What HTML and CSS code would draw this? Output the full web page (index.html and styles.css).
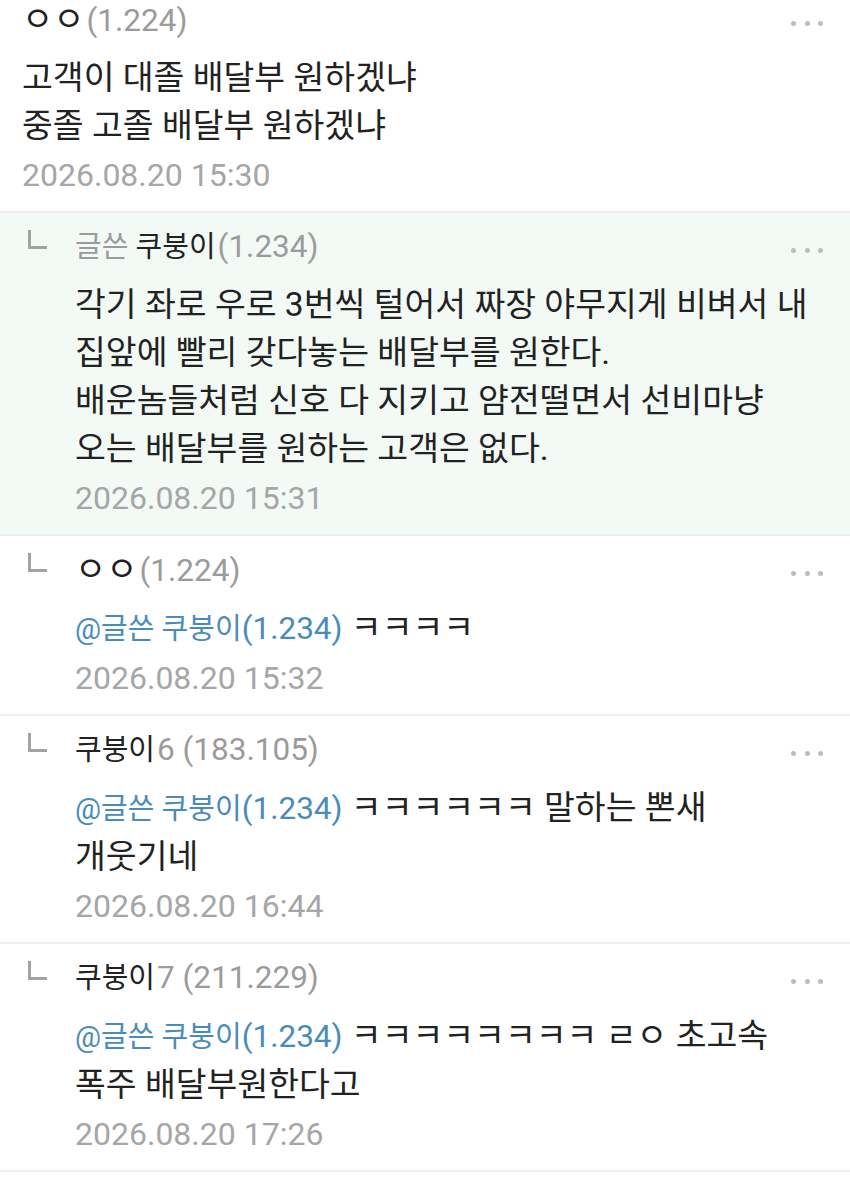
FILE: index.html
```html
<!DOCTYPE html>
<html lang="ko">
<head>
<meta charset="utf-8">
<title>댓글</title>
<link rel="stylesheet" href="styles.css">
</head>
<body>
<div class="list">
  <div class="comment first">
    <div class="content">
      <div class="head">
        <div class="name"><span class="jamo">ㅇㅇ</span><span class="ip">(1.224)</span></div>
        <div class="more"><i></i><i></i><i></i></div>
      </div>
      <div class="body">고객이 대졸 배달부 원하겠냐<br>중졸 고졸 배달부 원하겠냐</div>
      <div class="date">2026.08.20 15:30</div>
    </div>
  </div>

  <div class="comment reply writer">
    <div class="marker"></div>
    <div class="content">
      <div class="head">
        <div class="name"><span class="tag">글쓴</span> 쿠붕이<span class="ip">(1.234)</span></div>
        <div class="more"><i></i><i></i><i></i></div>
      </div>
      <div class="body">각기 좌로 우로 3번씩 털어서 짜장 야무지게 비벼서 내<br>집앞에 빨리 갖다놓는 배달부를 원한다.<br>배운놈들처럼 신호 다 지키고 얌전떨면서 선비마냥<br>오는 배달부를 원하는 고객은 없다.</div>
      <div class="date">2026.08.20 15:31</div>
    </div>
  </div>

  <div class="comment reply">
    <div class="marker"></div>
    <div class="content">
      <div class="head">
        <div class="name"><span class="jamo">ㅇㅇ</span><span class="ip">(1.224)</span></div>
        <div class="more"><i></i><i></i><i></i></div>
      </div>
      <div class="body"><span class="mention">@글쓴 쿠붕이<span class="num">(1.234)</span></span> ㅋㅋㅋㅋ</div>
      <div class="date">2026.08.20 15:32</div>
    </div>
  </div>

  <div class="comment reply">
    <div class="marker"></div>
    <div class="content">
      <div class="head">
        <div class="name">쿠붕이<span class="ip">6 (183.105)</span></div>
        <div class="more"><i></i><i></i><i></i></div>
      </div>
      <div class="body"><span class="mention">@글쓴 쿠붕이<span class="num">(1.234)</span></span> ㅋㅋㅋㅋㅋㅋ 말하는 뽄새<br>개웃기네</div>
      <div class="date">2026.08.20 16:44</div>
    </div>
  </div>

  <div class="comment reply">
    <div class="marker"></div>
    <div class="content">
      <div class="head">
        <div class="name">쿠붕이<span class="ip">7 (211.229)</span></div>
        <div class="more"><i></i><i></i><i></i></div>
      </div>
      <div class="body"><span class="mention">@글쓴 쿠붕이<span class="num">(1.234)</span></span> ㅋㅋㅋㅋㅋㅋㅋㅋ ㄹㅇ 초고속<br>폭주 배달부원한다고</div>
      <div class="date">2026.08.20 17:26</div>
    </div>
  </div>
</div>
</body>
</html>
```

FILE: styles.css
```css
html, body {
  margin: 0;
  padding: 0;
  background: #ffffff;
}

body {
  font-family: Roboto, "Noto Sans CJK KR", sans-serif;
  color: #222222;
  width: 850px;
  height: 1178px;
  overflow: hidden;
}

.comment {
  display: flex;
  padding: 14px 27px 16px 22px;
  border-bottom: 2px solid #ededed;
}

.comment.first {
  padding-top: 0;
}

.comment.reply {
  padding-left: 28px;
}

.comment.writer {
  background: #f3faf6;
}

.marker {
  flex: none;
  width: 16px;
  height: 16px;
  margin-top: 3px;
  margin-right: 28px;
  border-left: 3px solid #a3a3a3;
  border-bottom: 3px solid #a3a3a3;
}

.content {
  flex: 1;
  min-width: 0;
}

.head {
  display: flex;
  justify-content: space-between;
  align-items: center;
  height: 40px;
}

.name {
  font-size: 29px;
  line-height: 40px;
  color: #222222;
  white-space: nowrap;
}

.name .jamo {
  font-size: 34px;
}

.name .ip {
  font-size: 31.5px;
  color: #9b9b9b;
  margin-left: 2px;
}

.name .tag {
  color: #9b9b9b;
}

.more {
  display: flex;
  gap: 8.5px;
  margin-top: 6px;
}

.more i {
  display: block;
  width: 5px;
  height: 5px;
  border-radius: 50%;
  background: #bdbdbd;
}

.body {
  margin-top: 14px;
  font-size: 33.5px;
  line-height: 48px;
  color: #222222;
  white-space: nowrap;
}

.mention {
  font-size: 29px;
  color: #4a8cb9;
}

.mention .num {
  font-size: 31.5px;
}

.date {
  margin-top: 5px;
  font-size: 32px;
  line-height: 40px;
  color: #a6a6a6;
}
```
